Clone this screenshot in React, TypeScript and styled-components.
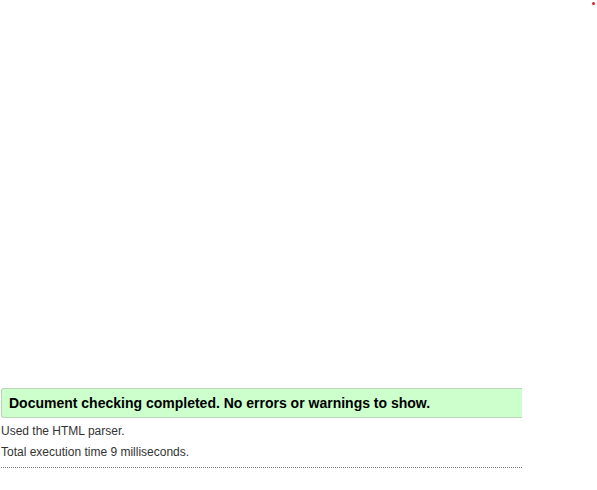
import styled, { createGlobalStyle } from "styled-components";

const GlobalStyle = createGlobalStyle`
  html, body {
    margin: 0;
    padding: 0;
    background: #fff;
  }
  body {
    font-family: "Liberation Sans", Arial, sans-serif;
    color: #222;
  }
`;

const Page = styled.div`
  position: relative;
  width: 597px;
  height: 490px;
  overflow: hidden;
`;

const Marker = styled.span`
  position: absolute;
  top: 2px;
  left: 592px;
  width: 3px;
  height: 3px;
  border-radius: 50%;
  background: #e0202a;
`;

const Results = styled.div`
  width: 521px;
  padding: 388px 0 0 1px;
`;

const Success = styled.p`
  margin: 0;
  height: 28px;
  padding: 0 0 0 7px;
  display: flex;
  align-items: center;
  background: #ccffcc;
  border: 1px solid #bcd3bc;
  border-right: none;
  border-radius: 3px 0 0 3px;
  font-size: 14px;
  font-weight: bold;
  color: #000;
`;

const Note = styled.p`
  margin: 0;
  font-size: 12px;
  line-height: 21px;
  color: #333;
`;

const Notes = styled.div`
  padding: 3px 0 4px 0;
  border-bottom: 1px dotted #777;
`;

export default function App() {
  return (
    <Page>
      <GlobalStyle />
      <Marker />
      <Results>
        <Success>Document checking completed. No errors or warnings to show.</Success>
        <Notes>
          <Note>Used the HTML parser.</Note>
          <Note>Total execution time 9 milliseconds.</Note>
        </Notes>
      </Results>
    </Page>
  );
}
